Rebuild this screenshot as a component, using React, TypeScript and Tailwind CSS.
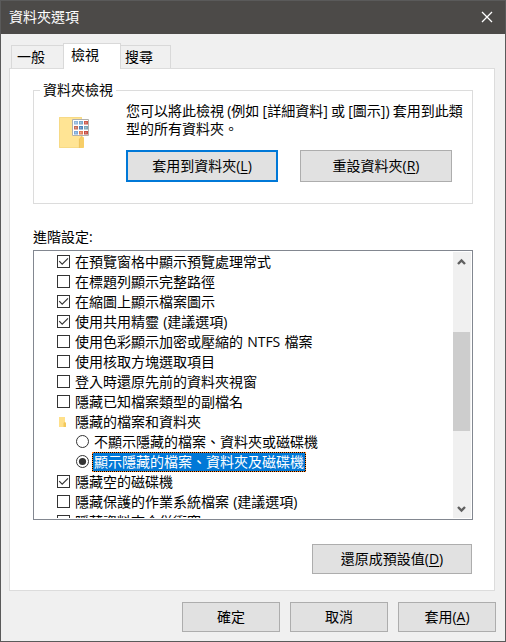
import React from "react";

type Row = { kind: "check" | "radio" | "folder"; label: string; on?: boolean; selected?: boolean };

const rows: Row[] = [
  { kind: "check", label: "在預覽窗格中顯示預覽處理常式", on: true },
  { kind: "check", label: "在標題列顯示完整路徑" },
  { kind: "check", label: "在縮圖上顯示檔案圖示", on: true },
  { kind: "check", label: "使用共用精靈 (建議選項)", on: true },
  { kind: "check", label: "使用色彩顯示加密或壓縮的 NTFS 檔案" },
  { kind: "check", label: "使用核取方塊選取項目" },
  { kind: "check", label: "登入時還原先前的資料夾視窗" },
  { kind: "check", label: "隱藏已知檔案類型的副檔名" },
  { kind: "folder", label: "隱藏的檔案和資料夾" },
  { kind: "radio", label: "不顯示隱藏的檔案、資料夾或磁碟機" },
  { kind: "radio", label: "顯示隱藏的檔案、資料夾及磁碟機", on: true, selected: true },
  { kind: "check", label: "隱藏空的磁碟機", on: true },
  { kind: "check", label: "隱藏保護的作業系統檔案 (建議選項)" },
  { kind: "check", label: "隱藏資料夾合併衝突" },
];

function Checkbox({ on }: { on?: boolean }) {
  return (
    <span className="flex h-[13px] w-[13px] shrink-0 border border-[#333] bg-white">
      {on && (
        <svg viewBox="0 0 11 11" className="h-[11px] w-[11px]" fill="none" stroke="#333" strokeWidth="1.2">
          <path d="M1.2 5.2 L4.2 8.2 L10 2.4" />
        </svg>
      )}
    </span>
  );
}

function Radio({ on }: { on?: boolean }) {
  return (
    <svg viewBox="0 0 13 13" className="mb-px h-[13px] w-[13px] shrink-0">
      <circle cx="6.5" cy="6.5" r="6" fill="#fff" stroke="#333" />
      {on && <circle cx="6.5" cy="6.5" r="3.6" fill="#333" />}
    </svg>
  );
}

function SmallFolder() {
  return (
    <svg viewBox="0 0 8 10" className="ml-0.5 h-[10px] w-[8px] shrink-0">
      <path d="M0 0h6v5l1 1v4H0z" fill="#ffe08a" />
      <path d="M4.5 6l1-1 1.5 1v4H4.5z" fill="#f3c85b" />
    </svg>
  );
}

function SettingRow({ row }: { row: Row }) {
  if (row.kind === "radio") {
    return (
      <div className="flex h-5 shrink-0 items-center pl-[41px]">
        <Radio on={row.on} />
        {row.selected ? (
          <span className="ml-[3px] h-5 border border-dotted border-[#ff8728] bg-black">
            <span className="block h-[18px] bg-[#0078d7] px-px leading-[17px] text-white">{row.label}</span>
          </span>
        ) : (
          <span className="ml-[5px] leading-5">{row.label}</span>
        )}
      </div>
    );
  }
  return (
    <div className="flex h-5 shrink-0 items-center pl-[22px]">
      <span className="mb-px flex w-[18px] shrink-0">
        {row.kind === "folder" ? <SmallFolder /> : <Checkbox on={row.on} />}
      </span>
      <span className="leading-5 [word-spacing:0.5px]">{row.label}</span>
    </div>
  );
}

function Button({ label, accel, className }: { label: string; accel?: string; className: string }) {
  return (
    <button className={"flex items-center justify-center bg-[#e1e1e1] leading-5 " + className}>
      <span>
        {label}
        {accel && (
          <>
            (<span className="underline decoration-1 underline-offset-2">{accel}</span>)
          </>
        )}
      </span>
    </button>
  );
}

function FolderPicture() {
  const tiles = ["#8fb6dc", "#79a8c8", "#cc5a4a", "#c66b55", "#4d83bd", "#78a6b8", "#79a8d9", "#e07a53", "#c84c43"];
  return (
    <svg viewBox="0 0 32 34" className="h-[34px] w-[32px]">
      <path d="M1 1h23v20h2v11H1z" fill="#ffe494" />
      <path d="M1.5 1.5h22v30h-22z" fill="none" stroke="#f7da86" />
      <path d="M21 32V23l3-3 2 2v9l-1 1z" fill="#f7ce68" />
      <path d="M21.4 32V23l2.8-2.6" fill="none" stroke="#eac25d" strokeWidth=".8" />
      <path d="M14.5 3.5h16v16h-16z" fill="#fff" stroke="#b0b0ac" />
      {tiles.map((c, i) => (
        <g key={i}>
          <rect x={16 + (i % 3) * 5} y={5 + Math.floor(i / 3) * 5} width="4" height="3.5" fill={c} />
          <rect x={17 + (i % 3) * 5} y={6 + Math.floor(i / 3) * 5} width="1.5" height="1.5" fill="#fff" fillOpacity=".35" />
        </g>
      ))}
    </svg>
  );
}

export default function App() {
  return (
    <div className="flex h-[642px] w-[506px] flex-col overflow-hidden border border-[#5a5a5a] bg-[#f0f0f0] font-['Open_Sans','Noto_Sans_CJK_TC',sans-serif] text-[14px] whitespace-nowrap text-black">
      <header className="flex h-[33px] shrink-0 items-center justify-between bg-[#4c4a48] pr-3 pb-0.5 pl-2 text-white">
        <span className="leading-5">資料夾選項</span>
        <svg viewBox="0 0 12 12" className="h-3 w-3" stroke="#fff" strokeWidth="1.3">
          <path d="M1 1l10 10M11 1l-10 10" />
        </svg>
      </header>

      <nav className="flex h-[34px] shrink-0 items-end pl-[10px]">
        <div className="h-[23px] w-[52px] border border-r-0 border-b-0 border-[#d9d9d9] pl-[5px] leading-[22px]">一般</div>
        <div className="z-10 -mb-px h-[26px] w-[58px] border border-b-0 border-[#d9d9d9] bg-white pl-[7px] leading-[22px]">檢視</div>
        <div className="h-[23px] w-[50px] border border-b-0 border-l-0 border-[#d9d9d9] pl-1 leading-[22px]">搜尋</div>
      </nav>

      <main className="ml-2 flex h-[523px] w-[486px] shrink-0 flex-col border border-[#dcdcdc] bg-white pl-[23px]">
        <fieldset className="mt-[11px] h-[124px] w-[440px] border border-[#dcdcdc] pl-[6px]">
          <legend className="h-5 px-[3px] leading-5">資料夾檢視</legend>
          <div className="flex pt-0.5">
            <div className="w-[86px] pt-[14px] pl-[18px]">
              <FolderPicture />
            </div>
            <div>
              <p className="leading-[18px] [word-spacing:-0.4px]">
                您可以將此檢視 (例如 [詳細資料] 或 [圖示]) 套用到此類
                <br />
                型的所有資料夾。
              </p>
              <div className="mt-3 flex gap-[22px]">
                <Button label="套用到資料夾" accel="L" className="h-8 w-[152px] border-2 border-[#0078d7]" />
                <Button label="重設資料夾" accel="R" className="h-8 w-[152px] border border-[#adadad]" />
              </div>
            </div>
          </div>
        </fieldset>

        <div className="mt-[23px] leading-5">進階設定:</div>
        <section className="mt-[3px] flex h-[270px] w-[440px] shrink-0 border border-[#828790] p-px">
          <div className="flex min-w-0 flex-1 flex-col overflow-hidden">
            {rows.map((row) => (
              <SettingRow key={row.label} row={row} />
            ))}
          </div>
          <div className="flex w-[18px] flex-col items-start bg-[#f0f0f0]">
            <svg viewBox="0 0 17 20" className="h-5 w-[17px]" fill="none" stroke="#606060" strokeWidth="2.4">
              <path d="M5 12l3.5-3.5L12 12" />
            </svg>
            <div className="mt-[60px] h-[99px] w-[17px] bg-[#cdcdcd]" />
            <svg viewBox="0 0 17 20" className="mt-auto h-5 w-[17px]" fill="none" stroke="#606060" strokeWidth="2.4">
              <path d="M5 9l3.5 3.5L12 9" />
            </svg>
          </div>
        </section>
        <Button label="還原成預設值" accel="D" className="mt-6 ml-[279px] h-[30px] w-[160px] shrink-0 border border-[#adadad]" />
      </main>

      <footer className="mt-[11px] flex justify-end gap-[10px] pr-[9px]">
        <Button label="確定" className="h-[30px] w-[98px] border border-[#adadad]" />
        <Button label="取消" className="h-[30px] w-[98px] border border-[#adadad]" />
        <Button label="套用" accel="A" className="h-[30px] w-[98px] border border-[#adadad]" />
      </footer>
    </div>
  );
}
